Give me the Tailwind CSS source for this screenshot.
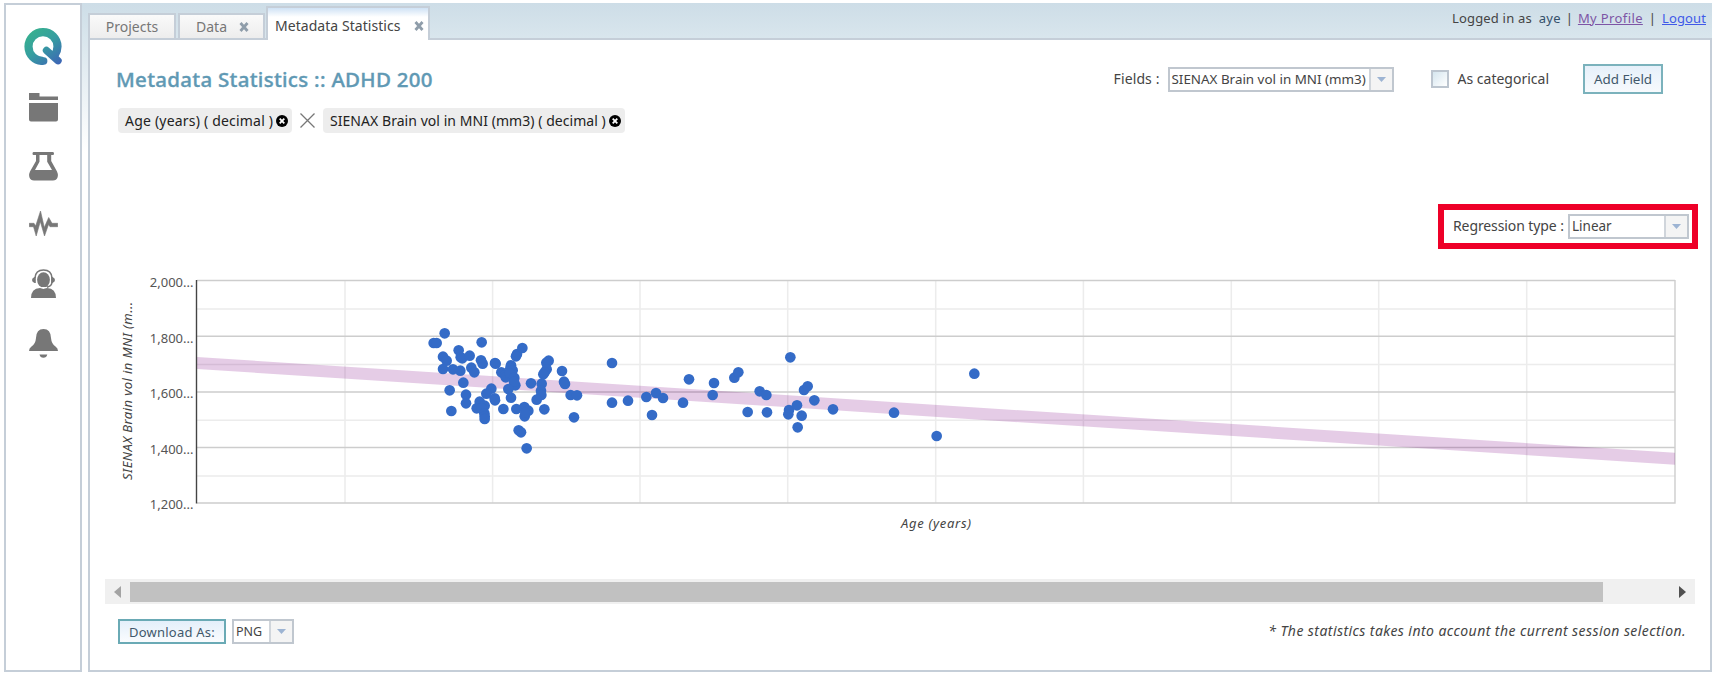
<!DOCTYPE html>
<html lang="en">
<head>
<meta charset="utf-8">
<title>Metadata Statistics</title>
<script src="https://cdn.jsdelivr.net/npm/@tailwindcss/browser@4"></script>
</head>
<body class="w-[1712px] h-[673px] overflow-hidden bg-white pt-[3px] pl-1 font-['Noto_Sans',sans-serif] text-[13px] leading-5 text-[#444]">
<div class="flex h-[669px] bg-[linear-gradient(#cddde7_0px,#d9e6ed_36px,#ffffff_150px)]">

  <!-- Sidebar -->
  <nav class="flex w-[78px] shrink-0 flex-col items-center border-2 border-[#c5ced8] bg-white text-[#777]">
    <svg class="mt-[23px] h-[37px] w-[38px] shrink-0" viewBox="0 0 38 37" fill="none">
      <defs><linearGradient id="q" x1="8" y1="2" x2="34" y2="36" gradientUnits="userSpaceOnUse"><stop offset="0" stop-color="#37b08f"/><stop offset=".45" stop-color="#369ea0"/><stop offset="1" stop-color="#3d67b5"/></linearGradient></defs>
      <path d="M19.500 33C10.500 33 4.500 26.500 4.500 18.500A14.500 14.400 0 0 1 33.500 18.500C33.500 21.500 32.800 24 30.800 27" stroke="url(#q)" stroke-width="8.200"/>
      <path d="M18.500 33H19.700M22.500 22.500L34 32.700" stroke="url(#q)" stroke-width="7.400" stroke-linecap="round"/>
    </svg>
    <svg class="mt-7 h-[29px] w-[29px] shrink-0" viewBox="0 0 29 29" fill="currentColor"><path d="M0 0H10.500V3.500H29V7H0ZM0 10H29V26.500Q29 28.500 27 28.500H2Q0 28.500 0 26.500Z"/></svg>
    <svg class="mt-[30px] h-[29px] w-[29px] shrink-0" viewBox="0 0 29 29"><path fill="currentColor" fill-rule="evenodd" d="M4.500 0H24Q25 0 25 1.500T24 3H22.200V9L28 19.500Q29.500 23 28.500 25.500Q27.500 28.500 24 28.500H5Q1.500 28.500 .5 25.500Q-.5 23 1 19.500L7 9V3H4.500Q3.500 3 3.500 1.500T4.500 0ZM10.500 3V9.800L6 18H23L18.200 9.800V3Z"/></svg>
    <svg class="mt-[29px] h-[27px] w-[29px] shrink-0" viewBox="0 0 29 27" fill="currentColor" stroke="currentColor" stroke-width=".6"><path d="M.3 13.300H5L6.700 16L11.500 1L15.300 17.500L19.700 7.500L23 13.300H28.700V16.700H21L19.500 14.500L15.500 26L11.300 11.500L7.200 26L4.500 16.700H.3Z"/></svg>
    <svg class="mt-8 h-[29px] w-[25px] shrink-0" viewBox="0 0 25 29"><ellipse cx="12.500" cy="10.800" rx="6.400" ry="7.600" fill="currentColor"/><path d="M0 29Q0 19.500 9 19L12.500 20L16 19Q25 19.500 25 29Z" fill="currentColor"/><path d="M4 9Q4.500 1 12.500 1T21 9V13.500Q20.500 18 13.500 18.500" fill="none" stroke="currentColor" stroke-width="1.600"/><path d="M4.800 8V14H3.500Q1 13 1 11T3.500 8ZM20.200 8V14H21.500Q24 13 24 11T21.500 8Z" fill="currentColor"/><path d="M10.500 18.500H16" stroke="#fff" stroke-width="1"/></svg>
    <svg class="mt-[31px] h-[29px] w-[29px] shrink-0" viewBox="0 0 29 29" fill="currentColor"><path d="M0 22Q0 19 2.500 17.500Q6.500 15 7 9Q7.300 0 14.500 0T22 9Q22.500 15 26.500 17.500Q29 19 29 22ZM10.500 25.500H18.300Q17.500 28.700 14.400 28.700T10.500 25.500Z"/></svg>
  </nav>

  <main class="ml-[6px] flex min-w-0 flex-1 flex-col">
    <!-- Tabs and account links -->
    <header class="flex h-[35px] shrink-0 items-end">
      <div class="flex h-[25px] w-[88px] items-center justify-center border-2 border-b-0 border-[#c5ced8] bg-gradient-to-b from-[#fafafa] to-[#ededed] text-sm text-[#777]">Projects</div>
      <div class="ml-[2px] flex h-[25px] w-[87px] items-center border-2 border-b-0 border-[#c5ced8] bg-gradient-to-b from-[#fafafa] to-[#ededed] pl-4 text-sm text-[#777]">Data
        <svg class="mt-[1px] ml-3 size-[10px]" viewBox="0 0 10 10" stroke="#8f9daa" stroke-width="2.800"><path d="M1.500 1L8.500 9M8.500 1L1.500 9"/></svg></div>
      <div class="z-10 -mb-[2px] ml-[1px] flex h-[34px] w-[164px] items-center border-2 border-b-0 border-[#c5ced8] bg-[linear-gradient(#cfe2f5,#ffffff_9px)] pt-[3px] pl-[7px] text-sm tracking-[0.05px] text-[#444]">Metadata Statistics
        <svg class="mt-[1px] ml-[13px] size-[10px]" viewBox="0 0 10 10" stroke="#8f9daa" stroke-width="2.800"><path d="M1.500 1L8.500 9M8.500 1L1.500 9"/></svg></div>
      <div class="flex h-[35px] flex-1 items-start justify-end pt-[5px] pr-[6px]">
        <span class="tracking-[0.19px]">Logged in as</span><span class="ml-[7px] tracking-[0.2px] text-[#34506b]">aye</span><span class="mx-[5px]">|</span><a class="tracking-[0.38px] text-[#7d55a5] underline">My Profile</a><span class="mx-[6px]">|</span><a class="tracking-[0.12px] text-[#4059e8] underline">Logout</a>
      </div>
    </header>

    <section class="flex h-[634px] flex-col border-2 border-[#c5ced8] bg-white pr-[11px] pl-[15px]">
      <!-- Title and field picker -->
      <div class="mt-6 flex h-[30px] shrink-0 items-center pl-[11px]">
        <h1 class="text-[20.5px] font-medium tracking-[0.28px] whitespace-nowrap text-[#6099b4] [-webkit-text-stroke:0.35px_#6099b4]">Metadata Statistics :: ADHD 200</h1>
        <div class="ml-auto flex items-center pr-[36px]">
          <span class="text-sm tracking-[0.1px]">Fields :</span>
          <div class="ml-2 flex h-[25px] w-[226px] border-2 border-[#c0c7cf] bg-white"><span class="flex-1 pl-[2px] text-[13.4px] leading-[20px] whitespace-nowrap text-[#444]">SIENAX Brain vol in MNI (mm3)</span><span class="flex w-[23px] items-center justify-center border-l-2 border-[#d0d5db] bg-[#f4f4f4]"><svg class="h-[5px] w-[9px]" viewBox="0 0 9 5"><path d="M0 0H9L4.500 5Z" fill="#9db4d3"/></svg></span></div>
          <span class="ml-[37px] size-[18px] border-2 border-[#bcc5cf] bg-gradient-to-br from-[#d5e6ef] to-white"></span>
          <span class="ml-[9px] text-sm whitespace-nowrap">As categorical</span>
          <button class="ml-[34px] h-[30px] w-[80px] border-2 border-[#7bb2bc] bg-gradient-to-b from-[#e6f0fa] to-[#f7fafd] text-[13.4px] whitespace-nowrap text-[#41586b]">Add Field</button>
        </div>
      </div>

      <!-- Selected fields -->
      <div class="mt-[14px] flex h-[25px] shrink-0 items-center pl-[13px] text-sm text-[#222]">
        <span class="flex h-[25px] w-[174px] items-center rounded bg-[#ededed] pl-[7px] tracking-[0.2px] whitespace-nowrap">Age (years) ( decimal )<svg class="ml-[3px] size-3 shrink-0" viewBox="0 0 12 12"><circle cx="6" cy="6" r="6"/><path d="M3.700 3.700L8.300 8.300M8.300 3.700L3.700 8.300" stroke="#fff" stroke-width="1.800"/></svg></span>
        <svg class="ml-2 size-[15px]" viewBox="0 0 15 15" stroke="#777" stroke-width="1.300"><path d="M.5 .5L14.500 14.500M14.500 .5L.5 14.500"/></svg>
        <span class="ml-2 flex h-[25px] w-[302px] items-center rounded bg-[#ededed] pl-[7px] tracking-[0.05px] whitespace-nowrap">SIENAX Brain vol in MNI (mm3) ( decimal )<svg class="ml-[3px] size-3 shrink-0" viewBox="0 0 12 12"><circle cx="6" cy="6" r="6"/><path d="M3.700 3.700L8.300 8.300M8.300 3.700L3.700 8.300" stroke="#fff" stroke-width="1.800"/></svg></span>
      </div>

      <!-- Regression selector -->
      <div class="mt-[71px] mr-[1px] flex h-[45px] w-[260px] shrink-0 items-center self-end border-6 border-[#ee0028] pl-[9px]">
        <span class="w-[115px] pb-[2px] text-sm tracking-[-0.1px] whitespace-nowrap">Regression type :</span>
        <div class="flex h-[25px] w-[121px] border-2 border-[#c0c7cf] bg-white"><span class="flex-1 pl-[2px] text-[13.5px] leading-[20px]">Linear</span><span class="flex w-[23px] items-center justify-center border-l-2 border-[#d0d5db] bg-[#f4f4f4]"><svg class="h-[5px] w-[9px]" viewBox="0 0 9 5"><path d="M0 0H9L4.500 5Z" fill="#9db4d3"/></svg></span></div>
      </div>

      <!-- Scatter chart -->
      <svg class="mt-4 h-[285px] w-[1590px] shrink-0" viewBox="105 265 1590 285" font-family="'Noto Sans', sans-serif" font-size="13">
        <g fill="none" stroke="#ececec" stroke-width="1.500"><path d="M197 309H1675M197 364.500H1675M197 420.300H1675M197 476H1675M345 280V503M492.600 280V503M640 280V503M787.700 280V503M935.700 280V503M1083.400 280V503M1231.300 280V503M1378.700 280V503M1526.700 280V503"/></g>
        <g fill="none" stroke="#cdcdcd" stroke-width="1.400"><path d="M197 280.500H1675M197 336.300H1675M197 392H1675M197 447.500H1675M197 503H1675V280"/></g>
        <path d="M197 357L1675 452.700V464.700L197 369Z" fill="#7b0080" fill-opacity=".2"/>
        <path d="M196.500 280V503.500" stroke="#444" stroke-width="1.400"/>
        <g fill="#346bc7">
          <g transform="translate(400 310) scale(.33333)">
            <circle cx="134" cy="70" r="16"/><circle cx="101" cy="99" r="16"/><circle cx="110" cy="99" r="16"/><circle cx="245" cy="97" r="16"/><circle cx="176" cy="121" r="16"/><circle cx="129" cy="140" r="16"/><circle cx="140" cy="152" r="16"/><circle cx="182" cy="142" r="16"/><circle cx="187" cy="145" r="16"/><circle cx="209" cy="137" r="16"/><circle cx="129" cy="177" r="16"/><circle cx="159" cy="178" r="16"/><circle cx="181" cy="182" r="16"/><circle cx="214" cy="173" r="16"/><circle cx="223" cy="187" r="16"/><circle cx="243" cy="151" r="16"/><circle cx="248" cy="161" r="16"/><circle cx="285" cy="159" r="16"/><circle cx="287" cy="161" r="16"/><circle cx="190" cy="218" r="16"/><circle cx="149" cy="241" r="16"/><circle cx="198" cy="254" r="16"/><circle cx="198" cy="280" r="16"/><circle cx="154" cy="303" r="16"/><circle cx="274" cy="236" r="16"/><circle cx="259" cy="251" r="16"/><circle cx="284" cy="265" r="16"/><circle cx="285" cy="271" r="16"/><circle cx="239" cy="275" r="16"/><circle cx="230" cy="295" r="16"/><circle cx="254" cy="287" r="16"/><circle cx="245" cy="295" r="16"/><circle cx="253" cy="310" r="16"/><circle cx="254" cy="319" r="16"/><circle cx="254" cy="327" r="16"/><circle cx="310" cy="297" r="16"/><circle cx="304" cy="187" r="16"/><circle cx="316" cy="195" r="16"/><circle cx="317" cy="202" r="16"/><circle cx="333" cy="166" r="16"/><circle cx="331" cy="175" r="16"/><circle cx="338" cy="181" r="16"/><circle cx="329" cy="190" r="16"/><circle cx="343" cy="203" r="16"/><circle cx="346" cy="226" r="16"/><circle cx="342" cy="215" r="16"/><circle cx="325" cy="237" r="16"/><circle cx="333" cy="263" r="16"/><circle cx="367" cy="114" r="16"/><circle cx="351" cy="132" r="16"/><circle cx="348" cy="139" r="16"/><circle cx="349" cy="297" r="16"/><circle cx="373" cy="291" r="16"/><circle cx="385" cy="302" r="16"/><circle cx="374" cy="319" r="16"/><circle cx="376" cy="308" r="16"/><circle cx="356" cy="361" r="16"/><circle cx="363" cy="367" r="16"/><circle cx="380" cy="415" r="16"/><circle cx="446" cy="152" r="16"/><circle cx="439" cy="158" r="16"/><circle cx="440" cy="178" r="16"/><circle cx="434" cy="187" r="16"/><circle cx="430" cy="193" r="16"/><circle cx="393" cy="220" r="16"/><circle cx="425" cy="221" r="16"/><circle cx="423" cy="242" r="16"/><circle cx="424" cy="255" r="16"/><circle cx="410" cy="269" r="16"/><circle cx="433" cy="298" r="16"/><circle cx="486" cy="183" r="16"/><circle cx="492" cy="215" r="16"/><circle cx="495" cy="222" r="16"/><circle cx="512" cy="255" r="16"/><circle cx="531" cy="256" r="16"/><circle cx="522" cy="322" r="16"/>
          </g>
          <g transform="translate(600 310) scale(.33333)">
            <circle cx="36" cy="159" r="16"/><circle cx="36" cy="278" r="16"/><circle cx="84" cy="272" r="16"/><circle cx="139" cy="261" r="16"/><circle cx="168" cy="249" r="16"/><circle cx="189" cy="264" r="16"/><circle cx="156" cy="315" r="16"/><circle cx="249" cy="278" r="16"/><circle cx="267" cy="208" r="16"/><circle cx="342" cy="219" r="16"/><circle cx="338" cy="255" r="16"/><circle cx="403" cy="203" r="16"/><circle cx="415" cy="187" r="16"/><circle cx="443" cy="306" r="16"/><circle cx="479" cy="244" r="16"/><circle cx="499" cy="255" r="16"/><circle cx="501" cy="307" r="16"/><circle cx="571" cy="142" r="16"/><circle cx="567" cy="300" r="16"/><circle cx="565" cy="313" r="16"/><circle cx="591" cy="286" r="16"/><circle cx="605" cy="317" r="16"/><circle cx="593" cy="352" r="16"/><circle cx="612" cy="240" r="16"/><circle cx="623" cy="229" r="16"/><circle cx="643" cy="271" r="16"/><circle cx="699" cy="298" r="16"/><circle cx="882" cy="308" r="16"/><circle cx="1010" cy="378" r="16"/><circle cx="1123" cy="191" r="16"/>
          </g>
        </g>
        <g fill="#555" text-anchor="end"><text x="193.500" y="287">2,000...</text><text x="193.500" y="342.500">1,800...</text><text x="193.500" y="398">1,600...</text><text x="193.500" y="453.500">1,400...</text><text x="193.500" y="509">1,200...</text></g>
        <text transform="translate(132 480) rotate(-90)" fill="#444" font-style="italic" textLength="178">SIENAX Brain vol in MNI (m...</text>
        <text x="901" y="528" fill="#444" font-style="italic" textLength="70">Age (years)</text>
      </svg>

      <!-- Horizontal scrollbar -->
      <div class="mt-[29px] flex h-[25px] w-[1590px] shrink-0 items-center bg-[#f0f0f0]">
        <svg class="ml-[9px] h-3 w-[7px]" viewBox="0 0 7 12"><path d="M7 0V12L0 6Z" fill="#a3a3a3"/></svg>
        <div class="ml-[9px] h-5 w-[1473px] bg-[#c1c1c1]"></div>
        <svg class="ml-auto mr-[9px] h-3 w-[7px]" viewBox="0 0 7 12"><path d="M0 0V12L7 6Z" fill="#505050"/></svg>
      </div>

      <!-- Download -->
      <footer class="mt-[15px] flex h-[25px] shrink-0 items-center pl-[13px]">
        <button class="h-[25px] w-[108px] border-2 border-[#6aaab5] bg-gradient-to-b from-[#e4effa] to-[#fafcfe] text-[13px] leading-5 tracking-[0.23px] whitespace-nowrap text-[#41586b]">Download As:</button>
        <div class="ml-[6px] flex h-[25px] w-[62px] border-2 border-[#c0c7cf] bg-white"><span class="flex-1 pl-[2px] text-[12.5px] leading-[21px]">PNG</span><span class="flex w-[23px] items-center justify-center border-l-2 border-[#d0d5db] bg-[#f4f4f4]"><svg class="h-[5px] w-[9px]" viewBox="0 0 9 5"><path d="M0 0H9L4.500 5Z" fill="#9db4d3"/></svg></span></div>
        <p class="ml-auto pr-[13px] pb-[2px] text-sm tracking-[0.43px] whitespace-nowrap italic">* The statistics takes into account the current session selection.</p>
      </footer>
    </section>
  </main>
</div>
</body>
</html>
